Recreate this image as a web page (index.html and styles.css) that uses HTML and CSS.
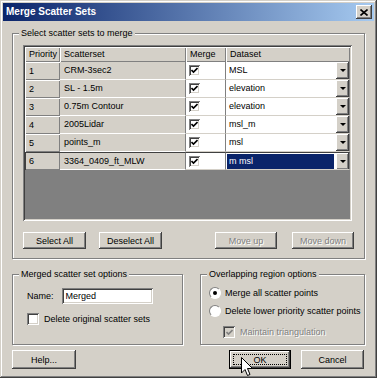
FILE: index.html
```html
<!DOCTYPE html>
<html lang="en">
<head>
    <meta charset="UTF-8">
    <title>Merge Scatter Sets</title>
    <link rel="stylesheet" href="styles.css">
</head>
<body>
    <div class="window">
        <div class="titlebar">
            <span class="title">Merge Scatter Sets</span>
            <span class="close">
                <svg width="8" height="7" viewBox="0 0 8 7"><path d="M0.5 0.5 L7.5 6.5 M7.5 0.5 L0.5 6.5" stroke="#000" stroke-width="1.6"/></svg>
            </span>
        </div>

        <div class="content">
            <div class="group group-sets">
                <span class="group-label">Select scatter sets to merge</span>

                <div class="grid">
                    <div class="hcell">Priority</div>
                    <div class="hcell">Scatterset</div>
                    <div class="hcell">Merge</div>
                    <div class="hcell">Dataset</div>

                    <div class="hcell">1</div>
                    <div class="cell">CRM-3sec2</div>
                    <div class="cell white"><span class="check"><svg width="7" height="7" viewBox="0 0 7 7"><path d="M0.5 3 L2.5 5 L6.5 1" fill="none" stroke="#000" stroke-width="1.6"/></svg></span></div>
                    <div class="cell white combo"><span class="combo-text">MSL</span><span class="combo-btn"><i></i></span></div>

                    <div class="hcell">2</div>
                    <div class="cell">SL - 1.5m</div>
                    <div class="cell white"><span class="check"><svg width="7" height="7" viewBox="0 0 7 7"><path d="M0.5 3 L2.5 5 L6.5 1" fill="none" stroke="#000" stroke-width="1.6"/></svg></span></div>
                    <div class="cell white combo"><span class="combo-text">elevation</span><span class="combo-btn"><i></i></span></div>

                    <div class="hcell">3</div>
                    <div class="cell">0.75m Contour</div>
                    <div class="cell white"><span class="check"><svg width="7" height="7" viewBox="0 0 7 7"><path d="M0.5 3 L2.5 5 L6.5 1" fill="none" stroke="#000" stroke-width="1.6"/></svg></span></div>
                    <div class="cell white combo"><span class="combo-text">elevation</span><span class="combo-btn"><i></i></span></div>

                    <div class="hcell">4</div>
                    <div class="cell">2005Lidar</div>
                    <div class="cell white"><span class="check"><svg width="7" height="7" viewBox="0 0 7 7"><path d="M0.5 3 L2.5 5 L6.5 1" fill="none" stroke="#000" stroke-width="1.6"/></svg></span></div>
                    <div class="cell white combo"><span class="combo-text">msl_m</span><span class="combo-btn"><i></i></span></div>

                    <div class="hcell">5</div>
                    <div class="cell">points_m</div>
                    <div class="cell white"><span class="check"><svg width="7" height="7" viewBox="0 0 7 7"><path d="M0.5 3 L2.5 5 L6.5 1" fill="none" stroke="#000" stroke-width="1.6"/></svg></span></div>
                    <div class="cell white combo"><span class="combo-text">msl</span><span class="combo-btn"><i></i></span></div>

                    <div class="hcell current">6</div>
                    <div class="cell current">3364_0409_ft_MLW</div>
                    <div class="cell white current"><span class="check"><svg width="7" height="7" viewBox="0 0 7 7"><path d="M0.5 3 L2.5 5 L6.5 1" fill="none" stroke="#000" stroke-width="1.6"/></svg></span></div>
                    <div class="cell white combo current"><span class="combo-text selected">m msl</span><span class="combo-btn"><i></i></span></div>

                    <div class="grid-empty"></div>
                </div>

                <div class="btn-row">
                    <button class="btn">Select All</button>
                    <button class="btn">Deselect All</button>
                    <span class="spacer"></span>
                    <button class="btn disabled">Move up</button>
                    <button class="btn disabled">Move down</button>
                </div>
            </div>

            <div class="options">
                <div class="group group-merged">
                    <span class="group-label">Merged scatter set options</span>
                    <div class="name-row">
                        <span>Name:</span>
                        <span class="textbox">Merged</span>
                    </div>
                    <div class="check-row">
                        <span class="check big"></span>
                        <span>Delete original scatter sets</span>
                    </div>
                </div>

                <div class="group group-overlap">
                    <span class="group-label">Overlapping region options</span>
                    <div class="radio-row">
                        <span class="radio on"></span>
                        <span>Merge all scatter points</span>
                    </div>
                    <div class="radio-row">
                        <span class="radio"></span>
                        <span>Delete lower priority scatter points</span>
                    </div>
                    <div class="check-row sub">
                        <span class="check big off"><svg width="7" height="7" viewBox="0 0 7 7"><path d="M0.5 3 L2.5 5 L6.5 1" fill="none" stroke="#808080" stroke-width="1.6"/></svg></span>
                        <span class="muted">Maintain triangulation</span>
                    </div>
                </div>
            </div>

            <div class="footer">
                <button class="btn wide">Help...</button>
                <button class="btn wide default">OK</button>
                <button class="btn wide cancel">Cancel</button>
            </div>
        </div>

        <svg class="cursor" width="13" height="20" viewBox="0 0 13 20"><path d="M0.5 0.5 L0.5 16 L4 12.5 L6.5 18.5 L9 17.5 L6.5 11.5 L11.5 11.5 Z" fill="#fff" stroke="#000" stroke-width="1"/></svg>
    </div>
</body>
</html>
```

FILE: styles.css
```css
body {
    margin: 0;
    font-family: "Liberation Sans", Arial, sans-serif;
    font-size: 9px;
    line-height: 12px;
    color: #000;
    background: #d4d0c8;
}

.window {
    position: relative;
    width: 377px;
    height: 378px;
    box-sizing: border-box;
    padding: 3px;
    background: #d4d0c8;
    box-shadow: inset -1px -1px #404040, inset 1px 1px #d4d0c8, inset -2px -2px #808080, inset 2px 2px #fff;
}

.titlebar {
    height: 18px;
    display: flex;
    align-items: center;
    justify-content: space-between;
    padding: 0 2px 0 3px;
    background: linear-gradient(to right, #0a246a, #a6caf0);
}

.title {
    color: #fff;
    font-weight: bold;
    font-size: 10px;
}

.close {
    width: 16px;
    height: 14px;
    display: flex;
    align-items: center;
    justify-content: center;
    background: #d4d0c8;
    box-shadow: inset -1px -1px #404040, inset 1px 1px #fff, inset -2px -2px #808080;
}

.content {
    padding: 0 9px;
}

.group {
    position: relative;
    box-sizing: border-box;
    border: 1px solid #808080;
    box-shadow: 1px 1px #fff, inset 1px 1px #fff;
}

.group-label {
    position: absolute;
    top: -7px;
    left: 6px;
    padding: 0 2px;
    line-height: 13px;
    background: #d4d0c8;
}

.group-sets {
    margin-top: 12px;
    height: 226px;
    padding: 11px 10px 9px 10px;
}

.grid {
    width: 329px;
    height: 176px;
    box-sizing: border-box;
    display: grid;
    grid-template-columns: 35px 126px 40px 124px;
    grid-template-rows: 15px repeat(6, 18px) 1fr;
    box-shadow: inset 1px 1px #808080, inset -1px -1px #fff, inset 2px 2px #404040, inset -2px -2px #d4d0c8;
    padding: 2px;
    background: #808080;
}

.hcell {
    box-sizing: border-box;
    padding: 0 4px;
    line-height: 15px;
    background: #d4d0c8;
    box-shadow: inset 1px 1px #fff, inset -1px -1px #808080;
    white-space: nowrap;
    overflow: hidden;
}

.grid .hcell:nth-child(n+5) {
    line-height: 18px;
}

.hcell.current {
    box-shadow: inset 1px 1px #404040, inset -1px -1px #808080;
}

.cell {
    box-sizing: border-box;
    padding: 0 4px;
    line-height: 17px;
    background: #d4d0c8;
    border-right: 1px solid #808080;
    border-bottom: 1px solid #fff;
    white-space: nowrap;
    overflow: hidden;
}

.cell.current {
    border-top: 1px solid #404040;
    line-height: 16px;
}

.cell.white {
    background: #fff;
    border-bottom-color: #d4d0c8;
    display: flex;
    align-items: center;
    padding-left: 3px;
}

.check {
    width: 11px;
    height: 11px;
    box-sizing: border-box;
    display: inline-flex;
    align-items: center;
    justify-content: center;
    background: #fff;
    box-shadow: inset 1px 1px #808080, inset -1px -1px #fff, inset 2px 2px #404040, inset -2px -2px #d4d0c8;
    flex-shrink: 0;
}

.check.big {
    width: 12px;
    height: 12px;
}

.check.off {
    background: #d4d0c8;
}

.cell.combo {
    padding: 0 0 0 1px;
    justify-content: space-between;
}

.combo-text {
    flex: 1;
    padding: 0 2px;
    line-height: 15px;
}

.combo-text.selected {
    background: #0a246a;
    color: #fff;
    margin-right: 2px;
}

.combo-btn {
    width: 13px;
    height: 17px;
    box-sizing: border-box;
    display: flex;
    align-items: center;
    justify-content: center;
    background: #d4d0c8;
    box-shadow: inset -1px -1px #404040, inset 1px 1px #fff, inset -2px -2px #808080;
}

.combo-btn i {
    width: 0;
    height: 0;
    border-left: 3px solid transparent;
    border-right: 3px solid transparent;
    border-top: 3px solid #000;
}

.grid-empty {
    grid-column: 1 / -1;
    background: #808080;
}

.btn-row {
    display: flex;
    gap: 13px;
    margin-top: 11px;
}

.spacer {
    flex: 1;
}

.btn {
    width: 63px;
    height: 17px;
    padding: 0;
    border: none;
    font-family: "Liberation Sans", Arial, sans-serif;
    font-size: 9px;
    color: #000;
    background: #d4d0c8;
    box-shadow: inset -1px -1px #404040, inset 1px 1px #fff, inset -2px -2px #808080;
}

.btn-row .disabled + .disabled {
    margin-left: 2px;
}

.btn.disabled {
    width: 62px;
    color: #808080;
    text-shadow: 1px 1px #fff;
}

.options {
    display: flex;
    justify-content: space-between;
    margin-top: 15px;
}

.group-merged {
    width: 171px;
    height: 71px;
    padding: 13px 10px 0 14px;
}

.group-overlap {
    width: 165px;
    height: 71px;
    padding: 9px 0 0 8px;
    white-space: nowrap;
}

.name-row {
    display: flex;
    align-items: center;
    gap: 8px;
}

.textbox {
    width: 91px;
    height: 16px;
    box-sizing: border-box;
    padding: 0 4px;
    line-height: 16px;
    background: #fff;
    box-shadow: inset 1px 1px #808080, inset -1px -1px #fff, inset 2px 2px #404040, inset -2px -2px #d4d0c8;
}

.check-row {
    display: flex;
    align-items: center;
    gap: 5px;
    margin-top: 9px;
}

.radio-row {
    display: flex;
    align-items: center;
    gap: 4px;
    height: 18px;
}

.radio {
    width: 12px;
    height: 12px;
    box-sizing: border-box;
    border-radius: 50%;
    background: #fff;
    border: 1px solid;
    border-color: #808080 #fff #fff #808080;
    position: relative;
    flex-shrink: 0;
}

.radio.on::after {
    content: "";
    position: absolute;
    left: 3px;
    top: 3px;
    width: 4px;
    height: 4px;
    border-radius: 50%;
    background: #000;
}

.check-row.sub {
    margin-top: 6px;
    padding-left: 14px;
}

.muted {
    color: #808080;
    text-shadow: 1px 1px #fff;
}

.footer {
    display: flex;
    margin-top: 5px;
}

.btn.wide {
    width: 64px;
    height: 19px;
}

.btn.default {
    width: 62px;
    margin-left: auto;
    box-shadow: inset 0 0 0 1px #000, inset -2px -2px #404040, inset 2px 2px #fff, inset -3px -3px #808080;
    outline: 1px dotted #000;
    outline-offset: -5px;
}

.btn.cancel {
    width: 63px;
    margin-left: 10px;
    margin-right: 1px;
}

.cursor {
    position: absolute;
    left: 241px;
    top: 357px;
}
```
